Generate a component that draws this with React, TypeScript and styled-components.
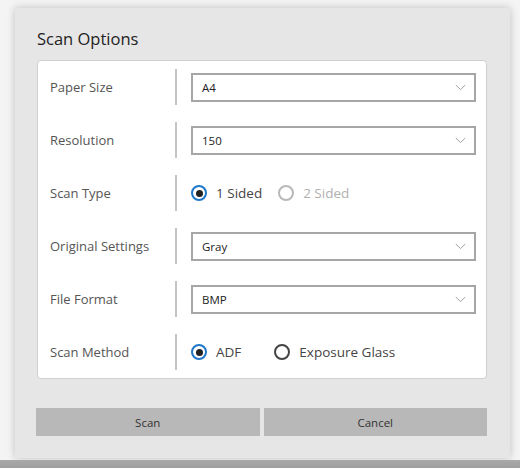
import React from 'react';
import styled, { createGlobalStyle } from 'styled-components';

const GlobalStyle = createGlobalStyle`
  html, body {
    margin: 0;
    padding: 0;
    background: #f4f4f4;
  }
  * { box-sizing: border-box; }
`;

const Page = styled.div`
  width: 520px;
  height: 468px;
  display: flex;
  flex-direction: column;
  padding-top: 8px;
  font-family: 'Open Sans', 'Noto Sans', sans-serif;
  background: #f4f4f4;
  overflow: hidden;
`;

const Dialog = styled.section`
  margin-left: 15px;
  width: 495px;
  height: 450px;
  background: #e6e6e6;
  box-shadow: 0 0 8px rgba(0, 0, 0, 0.22);
  padding: 20px 23px 0 22px;
  display: flex;
  flex-direction: column;
`;

const Title = styled.h2`
  margin: 0 0 10px 0;
  font-size: 16.5px;
  font-weight: 400;
  color: #222;
  line-height: 22px;
`;

const Card = styled.div`
  background: #fff;
  border: 1px solid #cfcfcf;
  border-radius: 4px;
  padding: 8px 10px 8px 12px;
  display: flex;
  flex-direction: column;
  gap: 17px;
`;

const Row = styled.div`
  display: flex;
  align-items: center;
  height: 36px;
`;

const Label = styled.span`
  width: 125px;
  font-size: 13px;
  color: #555;
`;

const Divider = styled.span`
  width: 2px;
  height: 36px;
  background: #c4c4c4;
  margin-right: 14px;
`;

const Select = styled.div`
  flex: 1;
  height: 29px;
  border: 2px solid #a6a6a6;
  display: flex;
  align-items: center;
  justify-content: space-between;
  padding: 0 8px 0 9px;
  font-size: 11.5px;
  color: #222;
`;

const RadioGroup = styled.div`
  display: flex;
  align-items: center;
  gap: 16px;
`;

const RadioItem = styled.label<{ $disabled?: boolean; $wide?: boolean }>`
  display: flex;
  align-items: center;
  gap: 9px;
  font-size: 13.5px;
  color: ${({ $disabled }) => ($disabled ? '#b0b0b0' : '#444')};
  margin-right: ${({ $wide }) => ($wide ? '17px' : '0')};
`;

const RadioCircle = styled.span<{ $checked?: boolean; $disabled?: boolean }>`
  width: 16px;
  height: 16px;
  border-radius: 50%;
  border: 2px solid
    ${({ $checked, $disabled }) => ($checked ? '#1f78c9' : $disabled ? '#b8b8b8' : '#444')};
  display: flex;
  align-items: center;
  justify-content: center;
  &::after {
    content: '';
    display: ${({ $checked }) => ($checked ? 'block' : 'none')};
    width: 7px;
    height: 7px;
    border-radius: 50%;
    background: #222;
  }
`;

const ButtonRow = styled.div`
  margin-top: 29px;
  margin-left: -1px;
  display: flex;
  gap: 4px;
`;

const Button = styled.button`
  flex: 1;
  height: 28px;
  border: none;
  background: #b8b8b8;
  font-family: inherit;
  font-size: 11.5px;
  color: #333;
  cursor: pointer;
`;

const Taskbar = styled.div`
  margin-top: 2px;
  flex: 1;
  background: linear-gradient(#a9a9a9, #9e9e9e);
`;

const Chevron: React.FC = () => (
  <svg width="11" height="7" viewBox="0 0 11 7" fill="none" aria-hidden="true">
    <path d="M0.8 1L5.5 5.6L10.2 1" stroke="#a0a0a0" strokeWidth="1" />
  </svg>
);

const SelectRow: React.FC<{ label: string; value: string }> = ({ label, value }) => (
  <Row>
    <Label>{label}</Label>
    <Divider />
    <Select>
      <span>{value}</span>
      <Chevron />
    </Select>
  </Row>
);

const App: React.FC = () => (
  <>
    <GlobalStyle />
    <Page>
      <Dialog>
        <Title>Scan Options</Title>
        <Card>
          <SelectRow label="Paper Size" value="A4" />
          <SelectRow label="Resolution" value="150" />
          <Row>
            <Label>Scan Type</Label>
            <Divider />
            <RadioGroup>
              <RadioItem>
                <RadioCircle $checked />
                1 Sided
              </RadioItem>
              <RadioItem $disabled>
                <RadioCircle $disabled />
                2 Sided
              </RadioItem>
            </RadioGroup>
          </Row>
          <SelectRow label="Original Settings" value="Gray" />
          <SelectRow label="File Format" value="BMP" />
          <Row>
            <Label>Scan Method</Label>
            <Divider />
            <RadioGroup>
              <RadioItem $wide>
                <RadioCircle $checked />
                ADF
              </RadioItem>
              <RadioItem>
                <RadioCircle />
                Exposure Glass
              </RadioItem>
            </RadioGroup>
          </Row>
        </Card>
        <ButtonRow>
          <Button>Scan</Button>
          <Button>Cancel</Button>
        </ButtonRow>
      </Dialog>
      <Taskbar />
    </Page>
  </>
);

export default App;
